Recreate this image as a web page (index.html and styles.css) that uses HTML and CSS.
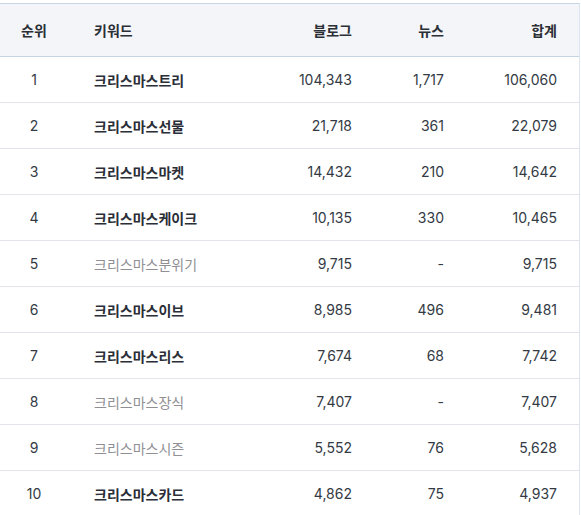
FILE: index.html
```html
<!DOCTYPE html>
<html lang="ko">
<head>
<meta charset="utf-8">
<link rel="stylesheet" href="styles.css">
</head>
<body>
<div class="table">
  <div class="row head">
    <div class="c rank">순위</div>
    <div class="c kw">키워드</div>
    <div class="c num blog">블로그</div>
    <div class="c num news">뉴스</div>
    <div class="c num total">합계</div>
  </div>
  <div class="row"><div class="c rank">1</div><div class="c kw strong">크리스마스트리</div><div class="c num blog">104,343</div><div class="c num news">1,717</div><div class="c num total">106,060</div></div>
  <div class="row"><div class="c rank">2</div><div class="c kw strong">크리스마스선물</div><div class="c num blog">21,718</div><div class="c num news">361</div><div class="c num total">22,079</div></div>
  <div class="row"><div class="c rank">3</div><div class="c kw strong">크리스마스마켓</div><div class="c num blog">14,432</div><div class="c num news">210</div><div class="c num total">14,642</div></div>
  <div class="row"><div class="c rank">4</div><div class="c kw strong">크리스마스케이크</div><div class="c num blog">10,135</div><div class="c num news">330</div><div class="c num total">10,465</div></div>
  <div class="row"><div class="c rank">5</div><div class="c kw muted">크리스마스분위기</div><div class="c num blog">9,715</div><div class="c num news">-</div><div class="c num total">9,715</div></div>
  <div class="row"><div class="c rank">6</div><div class="c kw strong">크리스마스이브</div><div class="c num blog">8,985</div><div class="c num news">496</div><div class="c num total">9,481</div></div>
  <div class="row"><div class="c rank">7</div><div class="c kw strong">크리스마스리스</div><div class="c num blog">7,674</div><div class="c num news">68</div><div class="c num total">7,742</div></div>
  <div class="row"><div class="c rank">8</div><div class="c kw muted">크리스마스장식</div><div class="c num blog">7,407</div><div class="c num news">-</div><div class="c num total">7,407</div></div>
  <div class="row"><div class="c rank">9</div><div class="c kw muted">크리스마스시즌</div><div class="c num blog">5,552</div><div class="c num news">76</div><div class="c num total">5,628</div></div>
  <div class="row"><div class="c rank">10</div><div class="c kw strong">크리스마스카드</div><div class="c num blog">4,862</div><div class="c num news">75</div><div class="c num total">4,937</div></div>
</div>
</body>
</html>
```

FILE: styles.css
```css
html, body {
  margin: 0;
  padding: 0;
  background: #ffffff;
}
body {
  font-family: Inter, "Noto Sans CJK KR", sans-serif;
  font-size: 14px;
  color: #333a44;
  padding-top: 3px;
}
.table {
  width: 579px;
  border-top: 1px solid #c9d6e8;
  border-right: 1px solid #dbe6f3;
}
.row {
  display: grid;
  grid-template-columns: 68px 204px 100px 92px 115px;
  height: 45px;
  align-items: center;
  border-bottom: 1px solid #e3e4e9;
}
.row.head {
  height: 52px;
  background: #f4f5f8;
  border-bottom: 1px solid #c7d4e6;
  font-weight: 700;
  color: #2b2f36;
}
.c {
  white-space: nowrap;
}
.rank {
  text-align: center;
}
.kw {
  padding-left: 26px;
}
.num {
  text-align: right;
}
.blog { padding-right: 20px; }
.news { padding-right: 20px; }
.total { padding-right: 22px; }
.strong {
  font-weight: 700;
  color: #2a2e37;
}
.muted {
  color: #8f8f94;
}
```
